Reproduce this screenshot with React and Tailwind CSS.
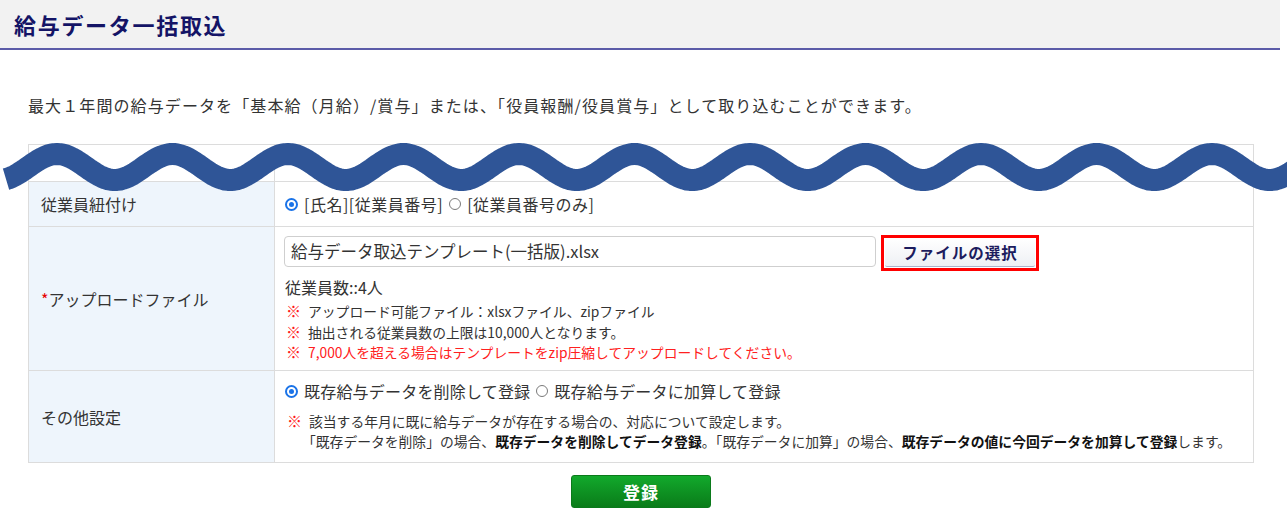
import React from 'react';

// wavy "cut" marker drawn over the table
const wavePath = (() => {
  let d = '';
  for (let x = 6; x <= 1296; x += 3) {
    const y = 167 - 13 * Math.cos((2 * Math.PI * (x - 57)) / 115.5);
    d += (x === 6 ? 'M' : 'L') + x + ' ' + y.toFixed(1) + ' ';
  }
  return d;
})();

const RadioOn = () => (
  <span className="inline-flex w-[13px] h-[13px] rounded-full border-2 border-[#1a73e8] items-center justify-center shrink-0">
    <span className="w-[5px] h-[5px] rounded-full bg-[#1a73e8]" />
  </span>
);

const RadioOff = () => (
  <span className="inline-block w-[12px] h-[12px] rounded-full border border-[#7a7a7a] shrink-0" />
);

const Note = ({ children, red }) => (
  <div className={`flex items-start gap-[6px] ${red ? 'text-[#ff2020]' : 'text-[#333]'}`}>
    <span className="text-[#ff1a1a] font-bold text-[15px] leading-[20px] w-[16px] shrink-0">※</span>
    <span>{children}</span>
  </div>
);

export default function App() {
  return (
    <div className="relative w-[1287px] h-[522px] overflow-hidden bg-white text-[#333] font-['Noto_Sans_CJK_JP','Noto_Sans',sans-serif]">
      {/* page title */}
      <div className="w-[1280px] h-[50px] bg-[#f2f2f2] border-b-2 border-[#5b5ba8] flex items-center pl-[14px]">
        <h1 className="text-[22px] font-bold text-[#141466] tracking-[1.7px] leading-none">給与データ一括取込</h1>
      </div>

      <p className="mt-[43px] ml-[28px] text-[16px] tracking-[1.1px] leading-[24px] text-[#333]">
        最大１年間の給与データを「基本給（月給）/賞与」または、「役員報酬/役員賞与」として取り込むことができます。
      </p>

      {/* form table */}
      <div className="mt-[27px] ml-[28px] w-[1226px] border border-[#dcdcdc]">
        <div className="grid grid-cols-[246px_1fr] h-[37px] border-b border-[#dcdcdc]">
          <div className="border-r border-[#dcdcdc]" />
          <div />
        </div>

        <div className="grid grid-cols-[246px_1fr] h-[45px] border-b border-[#dcdcdc]">
          <div className="bg-[#eef5fc] border-r border-[#dcdcdc] flex items-center pl-[12px] text-[16px]">従業員紐付け</div>
          <div className="flex items-center pl-[10px] text-[16px] tracking-[0.5px] gap-[6px]">
            <RadioOn />
            <span>[氏名][従業員番号]</span>
            <RadioOff />
            <span>[従業員番号のみ]</span>
          </div>
        </div>

        <div className="grid grid-cols-[246px_1fr] h-[144px] border-b border-[#dcdcdc]">
          <div className="bg-[#eef5fc] border-r border-[#dcdcdc] flex items-center pl-[12px] text-[16px]">
            <span className="text-[#e60000]">*</span>アップロードファイル
          </div>
          <div className="pt-[9px] pl-[9px]">
            <div className="flex items-start gap-[5px]">
              <div className="w-[592px] h-[31px] border border-[#cfcfcf] rounded-[4px] flex items-center px-[6px] text-[16.5px]">
                給与データ取込テンプレート(一括版).xlsx
              </div>
              <div className="-mt-[1px] w-[158px] h-[36px] border-[3px] border-[#ff0000] p-[1px]">
                <div className="h-full bg-gradient-to-b from-white to-[#eef0f4] border-b border-[#a9b3cc] rounded-[2px] flex items-center justify-center text-[15.5px] font-bold text-[#1c1c5e] tracking-[1px]">
                  ファイルの選択
                </div>
              </div>
            </div>
            <div className="mt-[6px] text-[16px] leading-[20px] pl-[1px]">従業員数::4人</div>
            <div className="mt-[4px] text-[13.8px] leading-[20.5px] pl-[2px]">
              <Note>アップロード可能ファイル：xlsxファイル、zipファイル</Note>
              <Note>抽出される従業員数の上限は10,000人となります。</Note>
              <Note red>7,000人を超える場合はテンプレートをzip圧縮してアップロードしてください。</Note>
            </div>
          </div>
        </div>

        <div className="grid grid-cols-[246px_1fr] h-[91px]">
          <div className="bg-[#eef5fc] border-r border-[#dcdcdc] flex items-center pl-[12px] text-[16px]">その他設定</div>
          <div className="pt-[10px] pl-[10px]">
            <div className="flex items-center gap-[6px] text-[16px] tracking-[0.2px] leading-[20px]">
              <RadioOn />
              <span>既存給与データを削除して登録</span>
              <RadioOff />
              <span>既存給与データに加算して登録</span>
            </div>
            <div className="mt-[10px] text-[13.8px] leading-[20px] pl-[2px]">
              <Note>該当する年月に既に給与データが存在する場合の、対応について設定します。</Note>
              <div className="pl-[15px]">
                「既存データを削除」の場合、<b className="text-[#111]">既存データを削除してデータ登録</b>。「既存データに加算」の場合、<b className="text-[#111]">既存データの値に今回データを加算して登録</b>します。
              </div>
            </div>
          </div>
        </div>
      </div>

      <div className="w-[1226px] ml-[28px] mt-[12px] flex justify-center">
        <button className="w-[140px] h-[33px] rounded-[3px] bg-gradient-to-b from-[#12a92c] to-[#0a7c19] border border-[#0b7a1b] text-white font-bold text-[17px] tracking-[1px]">
          登録
        </button>
      </div>

      <svg className="absolute left-0 top-0 pointer-events-none" width="1287" height="522" viewBox="0 0 1287 522">
        <path d={wavePath} fill="none" stroke="#2f5597" strokeWidth="22" strokeLinecap="butt" strokeLinejoin="round" />
      </svg>
    </div>
  );
}
